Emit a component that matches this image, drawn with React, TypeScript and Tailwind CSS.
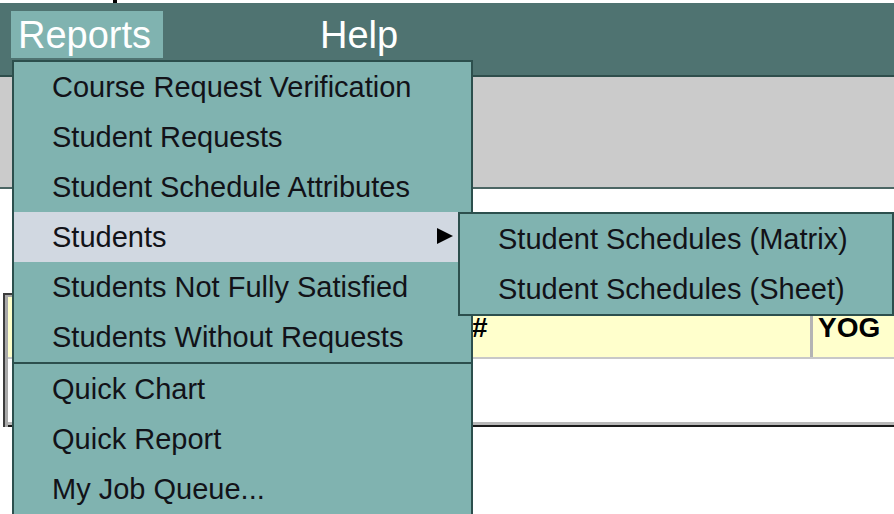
const mainItems = [
  "Course Request Verification",
  "Student Requests",
  "Student Schedule Attributes",
  "Students",
  "Students Not Fully Satisfied",
  "Students Without Requests",
]

const toolItems = ["Quick Chart", "Quick Report", "My Job Queue..."]

const studentItems = ["Student Schedules (Matrix)", "Student Schedules (Sheet)"]

function MenuItem({ label, active }: { label: string; active?: boolean }) {
  return (
    <div
      className={`flex h-[50px] items-center justify-between pl-[38px] pr-[17px] text-[29px] leading-none text-[#121218] ${
        active ? "bg-[#d1d8e1]" : ""
      }`}
    >
      <span>{label}</span>
      {active && (
        <svg width="18" height="18" viewBox="0 0 18 18" className="mt-[-2px]">
          <polygon points="1,1 17,9 1,17" fill="#000" />
        </svg>
      )}
    </div>
  )
}

export default function App() {
  return (
    <div className="relative h-[514px] w-[894px] overflow-hidden bg-white font-['Liberation_Sans',Arial,sans-serif]">
      {/* sliver of the page title above the menu bar */}
      <div className="flex h-[3px]">
        <div className="ml-[113px] h-[3px] w-[4px] bg-black" />
      </div>

      {/* menu bar */}
      <div className="flex h-[74px] items-start border-b-2 border-[#2f4e4c] bg-[#4f7371] pt-[8px] text-[38px] leading-none text-white">
        <div className="ml-[11px] flex h-[47px] w-[152px] items-center bg-[#80b3b0] pl-[7px]">Reports</div>
        <div className="ml-[157px] flex h-[47px] items-center">Help</div>
      </div>

      {/* toolbar strip */}
      <div className="h-[112px] border-b-2 border-[#4c6664] bg-[#cbcbcb]" />

      {/* grid */}
      <div className="ml-[3px] mt-[104px] border-l-2 border-t-2 border-[#3c3c3c]">
        <div className="border-l-[3px] border-t-2 border-[#a9a9a9]">
          <div className="flex h-[62px] border-b-2 border-[#c8c8c8] bg-[#ffffcc] text-[28px] font-bold leading-none text-black">
            <div className="w-[460px]" />
            <div className="w-[345px] border-r-[3px] border-[#b4b4b4] pl-[4px] pt-[17px]">#</div>
            <div className="pl-[5px] pt-[17px]">YOG</div>
          </div>
          <div className="h-[63px] bg-white" />
          <div className="h-[3px] bg-[#b8b8b8]" />
          <div className="h-[2px] bg-[#1a1a1a]" />
        </div>
      </div>

      {/* Reports dropdown */}
      <div className="absolute left-[12px] top-[60px] w-[461px] border-x-2 border-t-2 border-[#2c4f4d] bg-[#80b3b0]">
        {mainItems.map((label) => (
          <MenuItem key={label} label={label} active={label === "Students"} />
        ))}
        <div className="h-[2px] bg-[#2c4f4d]" />
        {toolItems.map((label) => (
          <MenuItem key={label} label={label} />
        ))}
      </div>

      {/* Students submenu */}
      <div className="absolute left-[458px] top-[212px] w-[436px] border-2 border-[#2c4f4d] bg-[#80b3b0]">
        {studentItems.map((label) => (
          <MenuItem key={label} label={label} />
        ))}
      </div>
    </div>
  )
}
